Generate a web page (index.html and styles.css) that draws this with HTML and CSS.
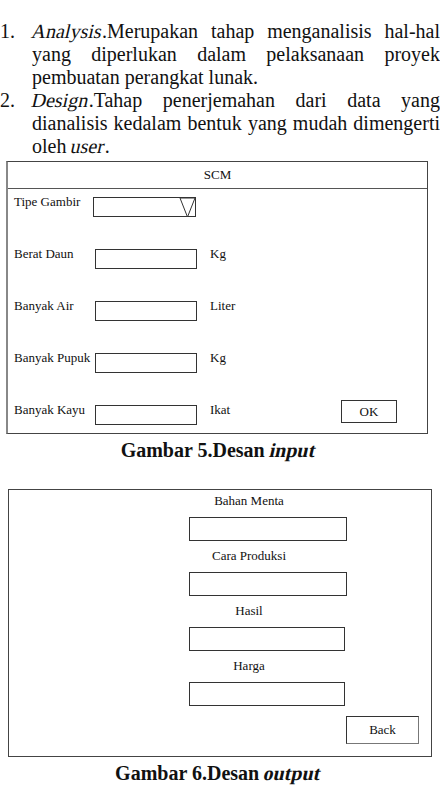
FILE: index.html
```html
<!DOCTYPE html>
<html lang="id">
<head>
    <meta charset="UTF-8">
    <title>Desain Input dan Output SCM</title>
    <link rel="stylesheet" href="styles.css">
</head>
<body>
    <ol class="steps">
        <li><span class="num">1.</span><p><em class="it">Analysis</em>.Merupakan tahap menganalisis hal-hal yang diperlukan dalam pelaksanaan proyek pembuatan perangkat lunak.</p></li>
        <li><span class="num">2.</span><p><em class="it">Design</em>.Tahap penerjemahan dari data yang dianalisis kedalam bentuk yang mudah dimengerti oleh <em class="it">user</em>.</p></li>
    </ol>

    <!-- form input -->
    <div class="frame input-frame">
        <div class="frame-title">SCM</div>
        <div class="input-body">
            <div class="row">
                <span class="label">Tipe Gambir</span>
                <div class="field select">
                    <svg width="17" height="21" viewBox="0 0 17 21">
                        <path d="M1 1 L16 1 L8.5 20 Z" fill="#fff" stroke="#333" stroke-width="1"/>
                    </svg>
                </div>
            </div>
            <div class="row">
                <span class="label">Berat Daun</span>
                <div class="field"></div>
                <span class="unit">Kg</span>
            </div>
            <div class="row">
                <span class="label">Banyak Air</span>
                <div class="field"></div>
                <span class="unit">Liter</span>
            </div>
            <div class="row">
                <span class="label">Banyak Pupuk</span>
                <div class="field"></div>
                <span class="unit">Kg</span>
            </div>
            <div class="row">
                <span class="label">Banyak Kayu</span>
                <div class="field"></div>
                <span class="unit">Ikat</span>
                <div class="btn btn-ok">OK</div>
            </div>
        </div>
    </div>
    <p class="caption">Gambar 5.Desan <em class="it">input</em></p>

    <!-- form output -->
    <div class="frame output-frame">
        <div class="out-col">
            <span class="out-label">Bahan Menta</span>
            <div class="out-field"></div>
            <span class="out-label">Cara Produksi</span>
            <div class="out-field"></div>
            <span class="out-label">Hasil</span>
            <div class="out-field short"></div>
            <span class="out-label">Harga</span>
            <div class="out-field short"></div>
        </div>
        <div class="btn btn-back">Back</div>
    </div>
    <p class="caption caption-out">Gambar 6.Desan <em class="it">output</em></p>
</body>
</html>
```

FILE: styles.css
```css
body {
    margin: 0;
    font-family: "Liberation Serif", "Times New Roman", serif;
    color: #111;
    background: #fff;
}

.it {
    display: inline-block;
    font-style: normal;
    transform: skewX(-13deg);
}

.steps {
    list-style: none;
    margin: 20px 0 0 0;
    padding: 0;
    font-size: 20px;
    line-height: 23px;
}

.steps li {
    display: flex;
}

.steps .num {
    width: 32px;
    flex: none;
}

.steps p {
    margin: 0;
    flex: 1;
    text-align: justify;
}

/* kotak desain */
.frame {
    border: 1px solid #444;
    font-size: 13px;
}

.input-frame {
    margin: 3px 12px 0 6px;
    border-left: 2px solid #888;
}

.frame-title {
    height: 26px;
    line-height: 26px;
    text-align: center;
    border-bottom: 1px solid #555;
}

.input-body {
    padding: 8px 30px 8px 6px;
    display: flex;
    flex-direction: column;
    gap: 32px;
}

.row {
    display: flex;
    align-items: flex-start;
    height: 20px;
}

.label {
    width: 81px;
    line-height: 14px;
    margin-top: -2px;
}

.unit {
    margin-left: 13px;
    line-height: 14px;
    margin-top: -2px;
}

.field {
    width: 100px;
    height: 18px;
    border: 1px solid #333;
}

.select {
    width: 101px;
    margin-left: -2px;
    display: flex;
    justify-content: flex-end;
}

.select svg {
    margin-top: -1px;
    margin-right: -1px;
}

.btn {
    border: 1px solid #333;
    text-align: center;
    box-sizing: border-box;
}

.btn-ok {
    width: 56px;
    height: 23px;
    line-height: 21px;
    margin: -5px 0 0 auto;
}

.caption {
    margin: 5px 0 0 0;
    text-align: center;
    font-size: 20px;
    line-height: 23px;
    font-weight: bold;
    padding-right: 4px;
}

.output-frame {
    margin: 27px 8px 0 8px;
    padding: 3px 12px 12px 0;
    display: flex;
    flex-direction: column;
}

.out-col {
    margin-left: 180px;
    width: 158px;
    display: flex;
    flex-direction: column;
}

.out-label {
    width: 120px;
    text-align: center;
    line-height: 16px;
}

.out-field {
    height: 22px;
    border: 1px solid #333;
    margin: 8px 0 7px 0;
}

.out-field.short {
    width: 154px;
}

.btn-back {
    width: 73px;
    height: 28px;
    line-height: 26px;
    margin: 3px 0 0 auto;
    border-right-color: #777;
    border-bottom-color: #777;
}

.caption-out {
    margin-top: 5px;
}
```
